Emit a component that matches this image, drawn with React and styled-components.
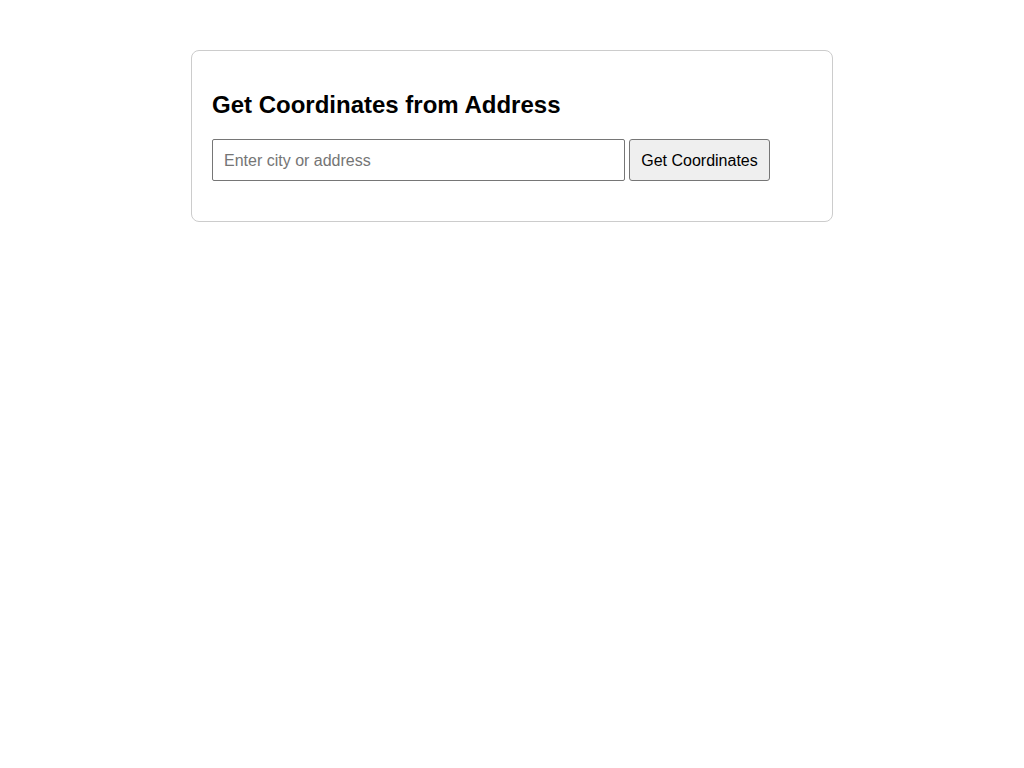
import React from "react";
import styled, { createGlobalStyle } from "styled-components";

const GlobalStyle = createGlobalStyle`
  html, body { margin: 0; padding: 0; background: #fff; }
  body { font-family: "Liberation Sans", Arial, sans-serif; }
  * { box-sizing: border-box; }
`;

const Card = styled.div`
  width: 642px;
  margin: 50px auto 0;
  padding: 20px 20px 40px;
  border: 1px solid #ccc;
  border-radius: 8px;
`;

const Title = styled.h2`
  margin: 0.83em 0 20.5px;
  font-size: 24px;
  font-weight: bold;
  line-height: normal;
  color: #000;
`;

const Row = styled.div`
  display: flex;
  gap: 4px;
  align-items: center;
`;

const Input = styled.input`
  width: 413px;
  height: 42px;
  padding: 1px 11px 0;
  font-family: "Liberation Sans", Arial, sans-serif;
  font-size: 16px;
  color: #000;
  border: 1px solid #767676;
  border-radius: 2px;
  outline: none;
  &::placeholder { color: #757575; }
`;

const Button = styled.button`
  width: 141px;
  height: 42px;
  padding: 1px 0 0;
  font-family: "Liberation Sans", Arial, sans-serif;
  font-size: 16px;
  color: #000;
  background: #efefef;
  border: 1px solid #767676;
  border-radius: 3px;
`;

export default function App() {
  return (
    <>
      <GlobalStyle />
      <Card>
        <Title>Get Coordinates from Address</Title>
        <Row>
          <Input placeholder="Enter city or address" />
          <Button>Get Coordinates</Button>
        </Row>
      </Card>
    </>
  );
}
